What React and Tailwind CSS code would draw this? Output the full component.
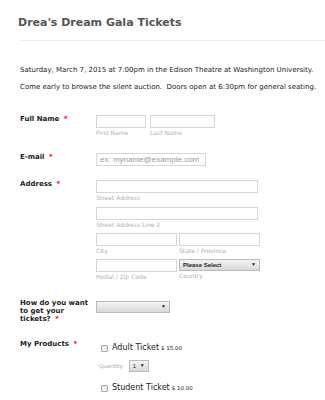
import React from 'react';

const font = { fontFamily: '"DejaVu Sans", Verdana, sans-serif' };

const Req = () => <span className="text-[#ff0000] ml-[2px]">*</span>;

const Box = ({ w, children, className = '' }) => (
  <div
    className={`h-[13px] border border-[#d6d6d6] bg-white ${className}`}
    style={{ width: w }}
  >
    {children}
  </div>
);

const Sub = ({ children }) => (
  <div className="text-[6px] text-[#b0b0b0] leading-[6px] mt-[2px]">{children}</div>
);

const Row = ({ label, children, className = '' }) => (
  <div className={`flex ${className}`}>
    <div className="w-[76px] shrink-0 font-bold text-[7px] leading-[8px] text-[#222]">
      {label}
    </div>
    <div className="flex-1">{children}</div>
  </div>
);

const SelectBox = ({ w, text, bold, className = '' }) => (
  <div
    className={`h-[12px] border border-[#bbb] bg-gradient-to-b from-[#f4f4f4] to-[#d9d9d9] flex items-center justify-between px-[3px] text-[6px] text-[#222] ${className}`}
    style={{ width: w, fontFamily: '"Liberation Sans", Arial, sans-serif' }}
  >
    <span className={bold ? 'font-bold' : ''}>{text}</span>
    <span className="text-[5px]">▼</span>
  </div>
);

const Product = ({ name, price }) => (
  <div>
    <div className="flex items-center">
      <div className="w-[7px] h-[7px] border border-[#aaa] bg-[#eee] rounded-[1px] mr-[4px]" />
      <span className="text-[8px] text-[#222]">{name}</span>
      <span className="text-[5.5px] text-[#222] ml-[2px]">{price}</span>
    </div>
    <div className="flex items-center mt-[6px] ml-[-2px]">
      <span className="text-[5.5px] text-[#aaa] mr-[6px]">Quantity</span>
      <SelectBox w={20} text="1" />
    </div>
  </div>
);

export default function App() {
  return (
    <div className="w-[325px] h-[400px] bg-white overflow-hidden" style={font}>
      <div className="pl-[18px] pt-[16px]">
        <h1 className="text-[11px] font-bold text-[#555] leading-[13px]">
          Drea's Dream Gala Tickets
        </h1>
        <div className="h-px bg-[#eee] mt-[11px]" />
      </div>

      <div className="pl-[20px] pt-[25px] text-[7px] text-[#222] leading-[9px]">
        <p>Saturday, March 7, 2015 at 7:00pm in the Edison Theatre at Washington University.</p>
        <p className="mt-[8px]">
          Come early to browse the silent auction.&nbsp; Doors open at 6:30pm for general seating.
        </p>
      </div>

      <div className="pl-[20px] pt-[23px]">
        <Row label={<>Full Name <Req /></>}>
          <div className="flex gap-[4px]">
            <div>
              <Box w={50} />
              <Sub>First Name</Sub>
            </div>
            <div>
              <Box w={65} />
              <Sub>Last Name</Sub>
            </div>
          </div>
        </Row>

        <Row label={<>E-mail <Req /></>} className="mt-[17px]">
          <Box w={110} className="flex items-center px-[3px]">
            <span
              className="text-[8px] text-[#999]"
              style={{ fontFamily: '"Liberation Sans", Arial, sans-serif' }}
            >
              ex: myname@example.com
            </span>
          </Box>
        </Row>

        <Row label={<>Address <Req /></>} className="mt-[14px]">
          <Box w={162} />
          <Sub>Street Address</Sub>
          <Box w={162} className="mt-[6px]" />
          <Sub>Street Address Line 2</Sub>
          <div className="flex gap-[2px] mt-[5px]">
            <div>
              <Box w={81} />
              <Sub>City</Sub>
            </div>
            <div>
              <Box w={81} />
              <Sub>State / Province</Sub>
            </div>
          </div>
          <div className="flex gap-[2px] mt-[5px]">
            <div>
              <Box w={81} />
              <Sub>Postal / Zip Code</Sub>
            </div>
            <div>
              <SelectBox w={81} text="Please Select" bold />
              <Sub>Country</Sub>
            </div>
          </div>
        </Row>

        <Row
          label={<>How do you want to get your tickets? <Req /></>}
          className="mt-[19px]"
        >
          <SelectBox w={74} text="" className="mt-[2px]" />
        </Row>

        <Row label={<>My Products <Req /></>} className="mt-[17px]">
          <div className="pl-[5px] pt-[2px]">
            <Product name="Adult Ticket" price="$ 15.00" />
            <div className="mt-[10px]">
              <Product name="Student Ticket" price="$ 10.00" />
            </div>
          </div>
        </Row>
      </div>
    </div>
  );
}
